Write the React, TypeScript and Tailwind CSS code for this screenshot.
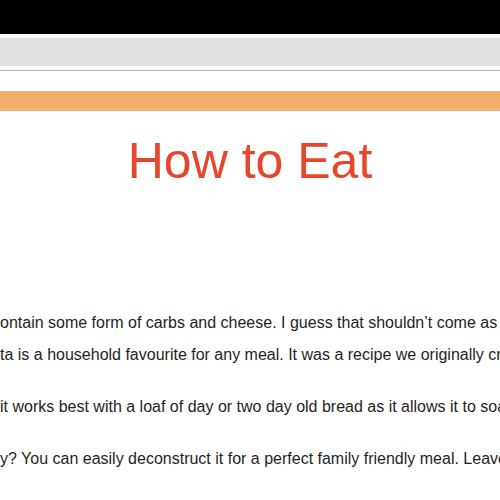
import React from 'react';

const paragraphs: string[][] = [
  [
    'ontain some form of carbs and cheese. I guess that shouldn’t come as a surprise',
    'ta is a household favourite for any meal. It was a recipe we originally created',
  ],
  ['it works best with a loaf of day or two day old bread as it allows it to soak up'],
  ['y? You can easily deconstruct it for a perfect family friendly meal. Leave out the'],
  ['ith a simple side salad and some garlic bread for the perfect weeknight dinner'],
];

const App: React.FC = () => {
  return (
    <div className="min-h-screen w-full overflow-hidden bg-white font-['Liberation_Sans',Arial,sans-serif]">
      <div className="h-[34px] bg-black" />
      <div className="mt-[4px] h-[28px] bg-[#e0e0e1]" />
      <div className="mt-[4px] border-t border-[#b3b3b3]" />
      <div className="mt-[20px] h-[20px] border-y border-[#e9b37f] bg-[#f5ae6a]" />

      <h1 className="mt-[21px] text-center text-[50px] leading-[58px] text-[#e6462b]">
        How to Eat
      </h1>

      <div className="mt-[117px] flex flex-col gap-[20px] text-[16px] leading-[32px] text-[#1f1f1f]">
        {paragraphs.map((lines, i) => (
          <div key={i}>
            {lines.map((line, j) => (
              <p key={j} className="whitespace-nowrap">
                {line}
              </p>
            ))}
          </div>
        ))}
      </div>
    </div>
  );
};

export default App;
